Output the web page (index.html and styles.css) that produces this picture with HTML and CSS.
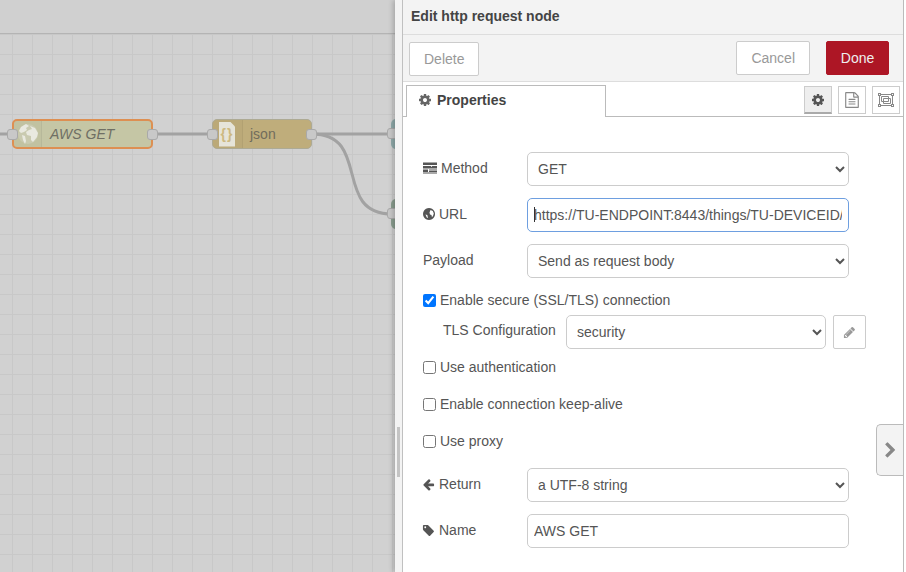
FILE: index.html
```html
<!DOCTYPE html>
<html lang="en">
<head>
    <meta charset="UTF-8">
    <title>Edit http request node</title>
    <link rel="stylesheet" href="styles.css">
</head>
<body>
    <!-- Dimmed flow canvas -->
    <div class="canvas">
        <div class="canvas-top"></div>
        <div class="workspace">
            <svg class="wires" width="395" height="538" viewBox="0 34 395 538">
                <path d="M0 134H12M152 134H212M312 134H394"/>
                <path d="M312 134C372 134 332 214 392 214"/>
            </svg>

            <div class="node node-http">
                <span class="node-icon">
                    <svg width="22" height="22" viewBox="0 0 22 22">
                        <circle class="globe-back" cx="11" cy="11" r="10"/>
                        <path class="globe-land" d="M9 1 12 3 9 5 10 7 7 9 4 10 2 8 4 4ZM13 3 18 5 21 10 20 14 16 19 14 17 14 13 10 12 9 9 12 7 15 6ZM5 12 8 13 9 18 8 21 6 17Z"/>
                    </svg>
                </span>
                <span class="node-label">AWS GET</span>
                <i class="port port-in"></i>
                <i class="port port-out"></i>
            </div>

            <div class="node node-json">
                <span class="node-icon">
                    <span class="json-doc">{}</span>
                </span>
                <span class="node-label">json</span>
                <i class="port port-in"></i>
                <i class="port port-out"></i>
            </div>

            <div class="node-stub stub-a"></div>
            <div class="node-stub stub-b"></div>
            <i class="port stub-port stub-port-a"></i>
            <i class="port stub-port stub-port-b"></i>
        </div>
    </div>

    <!-- Edit tray -->
    <div class="tray">
        <div class="tray-handle"><span class="handle-grip"></span></div>
        <div class="tray-panel">
            <div class="tray-title">Edit http request node</div>
            <div class="tray-toolbar">
                <button class="btn btn-delete">Delete</button>
                <div class="toolbar-right">
                    <button class="btn btn-cancel">Cancel</button>
                    <button class="btn btn-done">Done</button>
                </div>
            </div>

            <div class="tabs">
                <div class="tab">
                    <svg class="icon icon-cog" viewBox="0 0 1792 1792"><path d="M1152 896q0-106-75-181t-181-75-181 75-75 181 75 181 181 75 181-75 75-181zm512-109v222q0 12-8 23t-20 13l-185 28q-19 54-39 91 35 50 107 138 10 12 10 25t-9 23q-27 37-99 108t-94 71q-12 0-26-9l-138-108q-44 23-91 38-16 136-29 186-7 28-36 28h-222q-14 0-24.500-8.500t-11.500-21.500l-28-184q-49-16-90-37l-141 107q-10 9-25 9-14 0-25-11-126-114-165-168-7-10-7-23 0-12 8-23 15-21 51-66.500t54-70.500q-27-50-41-99l-183-27q-13-2-21-12.500t-8-23.500v-222q0-12 8-23t19-13l186-28q14-46 39-92-40-57-107-138-10-12-10-24 0-10 9-23 26-36 98.500-107.500t94.500-71.500q13 0 26 10l138 107q44-23 91-38 16-136 29-186 7-28 36-28h222q14 0 24.500 8.500t11.500 21.500l28 184q49 16 90 37l142-107q9-9 24-9 13 0 25 10 129 119 165 170 7 8 7 22 0 12-8 23-15 21-51 66.500t-54 70.500q26 50 41 98l183 28q13 2 21 12.500t8 23.500z"/></svg>
                    Properties
                </div>
                <div class="tab-links">
                    <span class="tab-link active">
                        <svg class="icon icon-cog" viewBox="0 0 1792 1792"><path d="M1152 896q0-106-75-181t-181-75-181 75-75 181 75 181 181 75 181-75 75-181zm512-109v222q0 12-8 23t-20 13l-185 28q-19 54-39 91 35 50 107 138 10 12 10 25t-9 23q-27 37-99 108t-94 71q-12 0-26-9l-138-108q-44 23-91 38-16 136-29 186-7 28-36 28h-222q-14 0-24.500-8.500t-11.500-21.500l-28-184q-49-16-90-37l-141 107q-10 9-25 9-14 0-25-11-126-114-165-168-7-10-7-23 0-12 8-23 15-21 51-66.500t54-70.500q-27-50-41-99l-183-27q-13-2-21-12.500t-8-23.500v-222q0-12 8-23t19-13l186-28q14-46 39-92-40-57-107-138-10-12-10-24 0-10 9-23 26-36 98.500-107.500t94.500-71.500q13 0 26 10l138 107q44-23 91-38 16-136 29-186 7-28 36-28h222q14 0 24.500 8.500t11.500 21.500l28 184q49 16 90 37l142-107q9-9 24-9 13 0 25 10 129 119 165 170 7 8 7 22 0 12-8 23-15 21-51 66.500t-54 70.500q26 50 41 98l183 28q13 2 21 12.500t8 23.500z"/></svg>
                    </span>
                    <span class="tab-link">
                        <svg class="icon icon-file" viewBox="0 0 1792 1792"><path d="M1596 380q28 28 48 76t20 88v1152q0 40-28 68t-68 28h-1344q-40 0-68-28t-28-68v-1600q0-40 28-68t68-28h896q40 0 88 20t76 48zm-444-244v376h376q-10-29-22-41l-313-313q-12-12-41-22zm384 1528v-1024h-416q-40 0-68-28t-28-68v-416h-768v1536h1280zm-1024-864q0-14 9-23t23-9h704q14 0 23 9t9 23v64q0 14-9 23t-23 9h-704q-14 0-23-9t-9-23v-64zm736 224q14 0 23 9t9 23v64q0 14-9 23t-23 9h-704q-14 0-23-9t-9-23v-64q0-14 9-23t23-9h704zm0 256q14 0 23 9t9 23v64q0 14-9 23t-23 9h-704q-14 0-23-9t-9-23v-64q0-14 9-23t23-9h704z"/></svg>
                    </span>
                    <span class="tab-link">
                        <svg class="icon-frame" width="16" height="14" viewBox="0 0 16 14">
                            <path d="M1.500 1.500H14.500V12.500H1.500Z M3.500 3.500H10.500V8.500H3.500Z M5.500 5.500H12.500V10.500H5.500Z"/>
                            <rect class="corner" x="0.500" y="0.500" width="2" height="2"/>
                            <rect class="corner" x="13.500" y="0.500" width="2" height="2"/>
                            <rect class="corner" x="0.500" y="11.500" width="2" height="2"/>
                            <rect class="corner" x="13.500" y="11.500" width="2" height="2"/>
                        </svg>
                    </span>
                </div>
            </div>

            <form class="form">
                <div class="row">
                    <label class="row-label">
                        <svg class="icon" viewBox="0 0 14 14"><path d="M0 1.500H14V4H0ZM0 5H8V5.800H9V5H14V7.500H0ZM0 8.500H5V11H0ZM6 8.500H14V9.500H6ZM6 10H14V11H6ZM0 11.500H14V12.500H0Z"/></svg>
                        Method
                    </label>
                    <select class="field"><option>GET</option></select>
                </div>
                <div class="row">
                    <label class="row-label label-sm">
                        <svg class="icon icon-sm" viewBox="1 1 12 12"><path fill-rule="evenodd" d="M7 1a6 6 0 1 0 0.010 0zM8.500 3 10.800 4 11.800 6.500 10.800 9.500 9.800 9.800 9.500 8 8 7.500 7.500 5.500zM3.500 7.500 5.300 8 6 11 4.800 10.500z"/></svg>
                        URL
                    </label>
                    <div class="field-wrap">
                        <input class="field field-focus" type="text" value="https://TU-ENDPOINT:8443/things/TU-DEVICEID/shadow">
                        <span class="caret"></span>
                    </div>
                </div>
                <div class="row">
                    <label class="row-label">Payload</label>
                    <select class="field"><option>Send as request body</option></select>
                </div>

                <label class="check-row check-tls">
                    <input type="checkbox" checked>
                    Enable secure (SSL/TLS) connection
                </label>
                <div class="tls-row">
                    <label class="tls-label">TLS Configuration</label>
                    <select class="field field-tls"><option>security</option></select>
                    <button type="button" class="edit-btn">
                        <svg class="icon" viewBox="0 0 1792 1792"><path d="M491 1536l91-91-235-235-91 91v107h128v128h107zm523-928q0-22-22-22-10 0-17 7l-542 542q-7 7-7 17 0 22 22 22 10 0 17-7l542-542q7-7 7-17zm-54-192l416 416-832 832h-416v-416zm683 96q0 53-37 90l-166 166-416-416 166-165q36-38 90-38 53 0 91 38l235 234q37 39 37 91z"/></svg>
                    </button>
                </div>
                <label class="check-row"><input type="checkbox">Use authentication</label>
                <label class="check-row"><input type="checkbox">Enable connection keep-alive</label>
                <label class="check-row"><input type="checkbox">Use proxy</label>

                <div class="row">
                    <label class="row-label label-sm">
                        <svg class="icon icon-sm icon-fa" viewBox="0 0 1792 1792"><path d="M1664 896v128q0 53-32.500 90.500t-84.500 37.500h-704l293 294q38 36 38 90t-38 90l-75 76q-37 37-90 37-52 0-91-37l-651-652q-37-37-37-90 0-52 37-91l651-650q38-38 91-38 52 0 90 38l75 74q38 38 38 91t-38 91l-293 293h704q52 0 84.500 37.500t32.500 90.500z"/></svg>
                        Return
                    </label>
                    <select class="field"><option>a UTF-8 string</option></select>
                </div>
                <div class="row">
                    <label class="row-label label-sm">
                        <svg class="icon icon-sm icon-fa" viewBox="0 0 1792 1792"><path d="M576 448q0-53-37.500-90.500t-90.500-37.500-90.500 37.500-37.500 90.500 37.500 90.500 90.500 37.500 90.500-37.500 37.500-90.500zm1067 576q0 53-37 90l-491 492q-39 37-91 37-53 0-90-37l-715-716q-38-37-64.500-101t-26.500-117v-416q0-52 38-90t90-38h416q53 0 117 26.500t102 64.500l715 714q37 39 37 91z"/></svg>
                        Name
                    </label>
                    <input class="field" type="text" value="AWS GET">
                </div>
            </form>

            <div class="sidebar-toggle">
                <svg class="icon" viewBox="0 0 1792 1792"><path d="M1363 877l-742 742q-19 19-45 19t-45-19l-166-166q-19-19-19-45t19-45l531-531-531-531q-19-19-19-45t19-45l166-166q19-19 45-19t45 19l742 742q19 19 19 45t-19 45z"/></svg>
            </div>
        </div>
    </div>
</body>
</html>
```

FILE: styles.css
```css
* {
    box-sizing: border-box;
}

html, body {
    height: 100%;
}

body {
    margin: 0;
    display: flex;
    height: 572px;
    overflow: hidden;
    background: #fff;
    color: #555;
    font-family: "Liberation Sans", Arial, sans-serif;
    font-size: 14px;
}

/* Canvas behind the tray */
.canvas {
    width: 395px;
    flex-shrink: 0;
    display: flex;
    flex-direction: column;
    background: #d0d0d0;
}

.canvas-top {
    height: 34px;
    border-bottom: 1px solid #b4b4b4;
}

.workspace {
    position: relative;
    flex: 1;
    overflow: hidden;
    background-color: #d1d1d1;
    background-image:
        linear-gradient(to right, #c8c8c8 1px, transparent 1px),
        linear-gradient(to bottom, #c8c8c8 1px, transparent 1px);
    background-size: 20px 20px;
    background-position: 12px 0;
}

.wires {
    position: absolute;
    left: 0;
    top: 0;
}

.wires path {
    fill: none;
    stroke: #a2a2a2;
    stroke-width: 3;
}

.node {
    position: absolute;
    top: 85px;
    height: 30px;
    display: flex;
    align-items: center;
    border-radius: 5px;
    border: 1px solid #adaa94;
}

.node-http {
    left: 12px;
    width: 141px;
    background: #c5c6a5;
    border: 2px solid #dd8f52;
    color: #6f6f64;
    font-style: italic;
}

.node-http .node-icon {
    width: 28px;
}

.node-json {
    left: 212px;
    width: 100px;
    background: #bfad7b;
    color: #716c5c;
}

.node-icon {
    width: 30px;
    height: 100%;
    flex-shrink: 0;
    display: flex;
    align-items: center;
    justify-content: center;
    background: rgba(0, 0, 0, 0.02);
    border-right: 1px solid rgba(0, 0, 0, 0.05);
    border-radius: 4px 0 0 4px;
}

.globe-back {
    fill: #c9cab0;
}

.globe-land {
    fill: #e9e9e0;
}

.json-doc {
    width: 16px;
    height: 25px;
    margin-right: 1px;
    background: #e6e4d9;
    color: #cdb981;
    font-size: 14px;
    font-weight: bold;
    letter-spacing: 1px;
    line-height: 24px;
    text-align: center;
    clip-path: polygon(0 0, 11px 0, 16px 5px, 16px 100%, 0 100%);
}

.node-label {
    padding-left: 7px;
    font-size: 14px;
}

.node-http .node-label {
    padding-left: 8px;
}

.port {
    position: absolute;
    top: 9px;
    width: 11px;
    height: 11px;
    background: #c8c8c8;
    border: 1px solid #a9a9a9;
    border-radius: 3px;
}

.port-in {
    left: -6px;
}

.port-out {
    right: -6px;
}

.node-http .port {
    top: 8px;
}

.node-http .port-in {
    left: -7px;
}

.node-http .port-out {
    right: -7px;
}

.node-stub {
    position: absolute;
    left: 391px;
    width: 10px;
    height: 30px;
    border-radius: 5px 0 0 5px;
}

.stub-a {
    top: 85px;
    background: #8fa9a9;
}

.stub-b {
    top: 165px;
    background: #8a9d8f;
}

.stub-port {
    left: 387px;
}

.stub-port-a {
    top: 94px;
}

.stub-port-b {
    top: 174px;
}

/* Tray */
.tray {
    flex: 1;
    display: flex;
    position: relative;
    box-shadow: -2px 0 5px rgba(0, 0, 0, 0.2);
}

.tray-handle {
    width: 8px;
    flex-shrink: 0;
    padding-top: 427px;
    background: #f3f3f3;
    border-right: 1px solid #c0c0c0;
}

.handle-grip {
    display: block;
    width: 3px;
    height: 50px;
    margin-left: 2px;
    background: #c4c4c4;
}

.tray-panel {
    width: 501px;
    position: relative;
    background: #fff;
    border-right: 1px solid #bbb;
}

.tray-title {
    height: 35px;
    padding: 7px 8px 0;
    background: #f3f3f3;
    border-bottom: 1px solid #ddd;
    color: #444;
    font-weight: bold;
    font-size: 14px;
    line-height: 18px;
}

.tray-toolbar {
    height: 47px;
    padding: 6px 14px 0 6px;
    display: flex;
    justify-content: space-between;
    align-items: flex-start;
    background: #f3f3f3;
    border-bottom: 1px solid #ddd;
}

.toolbar-right {
    display: flex;
    gap: 16px;
}

.btn {
    height: 34px;
    padding: 0 14px;
    background: #fff;
    border: 1px solid #ccc;
    border-radius: 2px;
    color: #999;
    font-family: inherit;
    font-size: 14px;
}

.btn-delete {
    margin-top: 1px;
}

.btn-done {
    width: 63px;
    padding: 0;
    background: #ad1625;
    border-color: #ad1625;
    color: #eee;
}

/* Tabs */
.tabs {
    height: 35px;
    padding: 3px 3px 0 3px;
    display: flex;
    justify-content: space-between;
    border-bottom: 1px solid #bbb;
}

.tab {
    width: 200px;
    height: 32px;
    padding: 5px 11px 0;
    display: flex;
    align-items: flex-start;
    gap: 5px;
    background: #fff;
    border: 1px solid #bbb;
    border-bottom: none;
    color: #444;
    font-weight: bold;
    line-height: 18px;
}

.tab-links {
    display: flex;
    gap: 6px;
    padding-top: 1px;
}

.tab-link {
    width: 28px;
    height: 28px;
    display: flex;
    align-items: center;
    justify-content: center;
    border: 1px solid #ccc;
    color: #888;
}

.tab-link.active {
    background: #eee;
    border-bottom: 2px solid #aaa;
    color: #555;
}

.icon {
    width: 14px;
    height: 14px;
    flex-shrink: 0;
    fill: currentColor;
}

.icon-cog {
    margin-top: 2px;
}

.tab .icon-cog {
    color: #666;
}

.tab-link .icon-cog {
    margin-top: 0;
}

.icon-file {
    width: 16px;
    height: 16px;
}

.icon-frame {
    fill: none;
    stroke: #888;
}

.icon-frame .corner {
    fill: #fff;
}

/* Form */
.form {
    padding: 35px 0 0 20px;
}

.row {
    display: flex;
    margin-bottom: 12px;
}

.row-label {
    width: 104px;
    padding-top: 7px;
    line-height: 18px;
    display: flex;
    align-items: flex-start;
    gap: 4px;
}

.row-label .icon {
    margin-top: 2px;
}

.row-label .icon-sm {
    width: 12px;
    height: 12px;
    margin-top: 3px;
}

.row-label .icon-fa {
    width: 13px;
    height: 13px;
    margin-left: -1px;
}

.field {
    width: 322px;
    height: 34px;
    padding: 0 6px;
    background: #fff;
    border: 1px solid #ccc;
    border-radius: 5px;
    color: #555;
    font-family: inherit;
    font-size: 14px;
}

.field-wrap {
    position: relative;
    display: flex;
}

.field-focus {
    border-color: #6e9fe0;
    outline: none;
}

/* text cursor sitting at the start of the focused url field */
.caret {
    position: absolute;
    left: 7px;
    top: 9px;
    width: 1px;
    height: 15px;
    background: #333;
}

.check-row {
    height: 20px;
    margin-bottom: 17px;
    display: flex;
    align-items: center;
    gap: 4px;
    line-height: 20px;
}

.check-row input {
    width: 13px;
    height: 13px;
    margin: 0;
    accent-color: #0075ff;
}

.check-tls {
    margin-bottom: 5px;
}

.tls-row {
    display: flex;
    margin-bottom: 8px;
    padding-left: 20px;
}

.tls-label {
    width: 123px;
    padding-top: 6px;
    line-height: 18px;
}

.field-tls {
    width: 260px;
}

.edit-btn {
    width: 33px;
    height: 34px;
    margin-left: 7px;
    padding: 0;
    display: flex;
    align-items: center;
    justify-content: center;
    background: #fff;
    border: 1px solid #ccc;
    border-radius: 2px;
    color: #999;
}

.edit-btn .icon {
    width: 13px;
    height: 13px;
}

.sidebar-toggle {
    position: absolute;
    right: 0;
    top: 424px;
    width: 27px;
    height: 52px;
    display: flex;
    align-items: center;
    justify-content: center;
    background: #f3f3f3;
    border: 1px solid #bbb;
    border-right: none;
    border-radius: 5px 0 0 5px;
    color: #888;
}

.sidebar-toggle .icon {
    width: 17px;
    height: 17px;
}
```
